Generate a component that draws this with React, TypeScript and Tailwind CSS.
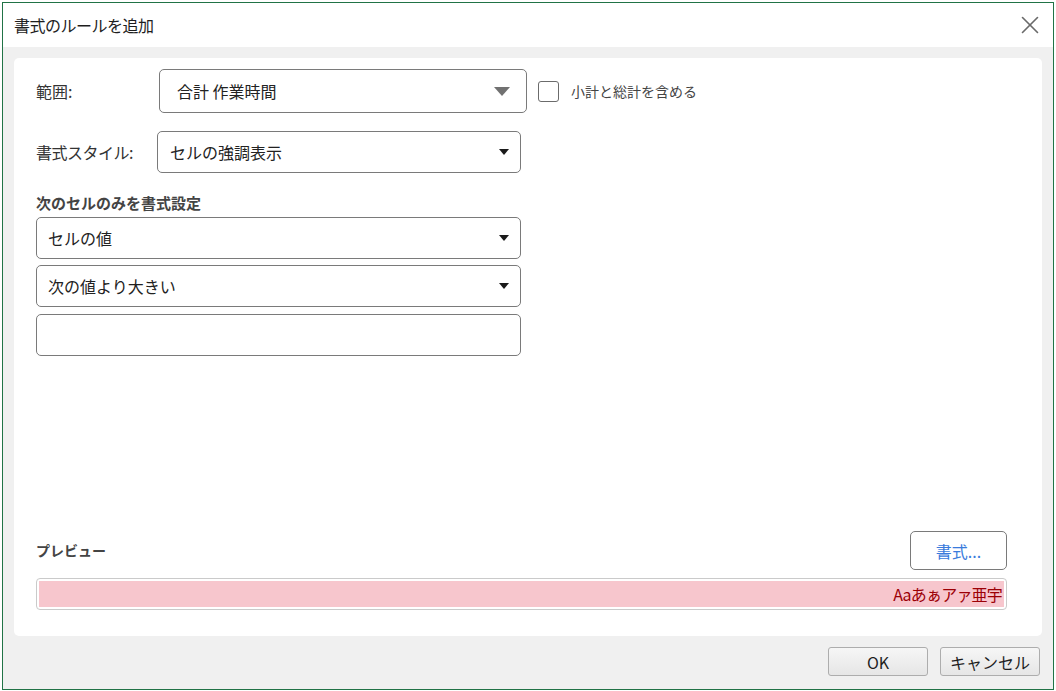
import { X } from "lucide-react";

const font = { fontFamily: '"Noto Sans CJK JP", "Noto Sans", sans-serif' };

function Caret({ big }: { big?: boolean }) {
  if (big) {
    return (
      <svg width="16" height="9" viewBox="0 0 16 9" className="shrink-0">
        <path d="M0 0 H16 L8 9 Z" fill="#717171" />
      </svg>
    );
  }
  return (
    <svg width="10" height="6" viewBox="0 0 10 6" className="shrink-0">
      <path d="M0 0 H10 L5 6 Z" fill="#1a1a1a" />
    </svg>
  );
}

function Select({ value, className, big }: { value: string; className: string; big?: boolean }) {
  return (
    <div
      className={`flex items-center justify-between rounded-[5px] border border-[#7a7a7a] bg-white text-[16px] leading-[20px] text-[#222] ${className}`}
    >
      <span>{value}</span>
      <Caret big={big} />
    </div>
  );
}

export default function App() {
  return (
    <div className="w-[1056px] h-[691px] bg-white overflow-hidden" style={font}>
      <div className="ml-[2px] mt-[2px] w-[1052px] h-[688px] border border-[#217346] flex flex-col bg-[#f0f0f0]">
        {/* title bar */}
        <div className="h-[44px] shrink-0 bg-white flex items-center justify-between pl-[11px] pr-[8px]">
          <span className="text-[16px] leading-[20px] text-[#1e1e1e] tracking-[-0.5px]">書式のルールを追加</span>
          <X className="w-[30px] h-[30px] text-[#6a6a6a]" strokeWidth={1.3} />
        </div>

        {/* content panel */}
        <div className="mt-[11px] ml-[11px] w-[1028px] h-[578px] rounded-[5px] bg-white flex flex-col px-[22px] pt-[11px] pb-[26px]">
          <div className="flex items-center h-[44px]">
            <span className="w-[123px] text-[16px] text-[#333]">範囲:</span>
            <Select value="合計 作業時間" big className="w-[368px] h-[44px] pl-[17px] pr-[16px]" />
            <div className="ml-[11px] w-[21px] h-[21px] rounded-[3px] border border-[#6b6b6b] bg-white" />
            <span className="ml-[12px] text-[14px] text-[#444]">小計と総計を含める</span>
          </div>

          <div className="flex items-center h-[42px] mt-[18px]">
            <span className="w-[121px] text-[16px] text-[#333] tracking-[-0.5px]">書式スタイル:</span>
            <Select value="セルの強調表示" className="w-[364px] h-[42px] pl-[12px] pr-[11px]" />
          </div>

          <div className="mt-[20px] text-[15px] leading-[20px] font-bold text-[#444]">次のセルのみを書式設定</div>

          <div className="mt-[4px] flex flex-col w-[485px]">
            <Select value="セルの値" className="h-[42px] pl-[11px] pr-[11px]" />
            <Select value="次の値より大きい" className="h-[42px] mt-[6px] pl-[11px] pr-[11px]" />
            <div className="h-[42px] mt-[7px] rounded-[5px] border border-[#7a7a7a] bg-white" />
          </div>

          <div className="mt-auto flex items-center justify-between w-[971px]">
            <span className="text-[14px] font-bold text-[#444]">プレビュー</span>
            <button className="w-[97px] h-[39px] rounded-[5px] border border-[#7a7a7a] bg-white text-[16px] text-[#3a7bdc]">
              書式...
            </button>
          </div>
          <div className="mt-[8px] w-[971px] h-[32px] rounded-[4px] border border-[#cacaca] p-[2px]">
            <div className="h-full bg-[#f7c6cd] flex items-center justify-end pr-[2px] text-[16px] leading-[20px] text-[#9c0006] tracking-[-0.8px]">
              Aaあぁアァ亜宇
            </div>
          </div>
        </div>

        {/* footer buttons */}
        <div className="flex justify-end gap-[12px] pr-[13px] mt-[11px]">
          <button className="w-[100px] h-[29px] rounded-[3px] border border-[#adadad] bg-gradient-to-b from-[#f6f6f6] to-[#e6e6e6] text-[16px] leading-[20px] text-[#1e1e1e]">
            OK
          </button>
          <button className="w-[100px] h-[29px] rounded-[3px] border border-[#adadad] bg-gradient-to-b from-[#f6f6f6] to-[#e6e6e6] text-[16px] leading-[20px] text-[#1e1e1e]">
            キャンセル
          </button>
        </div>
      </div>
    </div>
  );
}
